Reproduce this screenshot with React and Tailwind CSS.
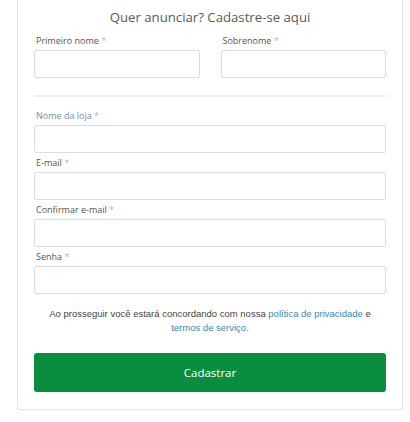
import React from 'react'

function Field({ label, labelClass = 'text-[#555]', className = '' }) {
  return (
    <div className={className}>
      <label className={`block pl-[2px] text-[9px] leading-[12px] mb-[3px] ${labelClass}`}>
        {label} <span className="text-[#8ec3df]">*</span>
      </label>
      <input className="block w-full h-[28px] border border-[#dcdcdc] rounded-[2px] bg-white outline-none" />
    </div>
  )
}

export default function App() {
  return (
    <div className="w-[410px] h-[422px] bg-white overflow-hidden font-['Open_Sans',sans-serif]">
      <div className="ml-[17px] w-[386px] -mt-[4px] border border-t-0 border-[#e3e3e3] rounded-b-[3px] shadow-[0_1px_2px_rgba(0,0,0,0.04)] px-[16px] pt-[11px] pb-[17px]">
        <h2 className="text-center text-[13.2px] leading-[20px] text-[#5a5a5a] mb-[8px]">
          Quer anunciar? Cadastre-se aqui
        </h2>

        <div className="flex gap-[21px]">
          <Field label="Primeiro nome" className="flex-1" />
          <Field label="Sobrenome" className="flex-1" />
        </div>

        <div className="h-[2px] bg-[#eeeeee] mt-[17px] mb-[13px]" />

        <div className="flex flex-col gap-[4px]">
          <Field label="Nome da loja" labelClass="text-[#7d8f99]" />
          <Field label="E-mail" />
          <Field label="Confirmar e-mail" />
          <Field label="Senha" />
        </div>

        <p className="mt-[13px] text-center text-[9.5px] leading-[14px] text-[#444] font-['Liberation_Sans',Arial,sans-serif] px-[6px]">
          Ao prosseguir você estará concordando com nossa{' '}
          <a className="text-[#3a86b0]">política de privacidade</a> e{' '}
          <a className="text-[#3a86b0]">termos de serviço.</a>
        </p>

        <button className="mt-[18px] w-full h-[39px] bg-[#0a8d3e] rounded-[3px] text-white text-[11.5px]">
          Cadastrar
        </button>
      </div>
    </div>
  )
}
